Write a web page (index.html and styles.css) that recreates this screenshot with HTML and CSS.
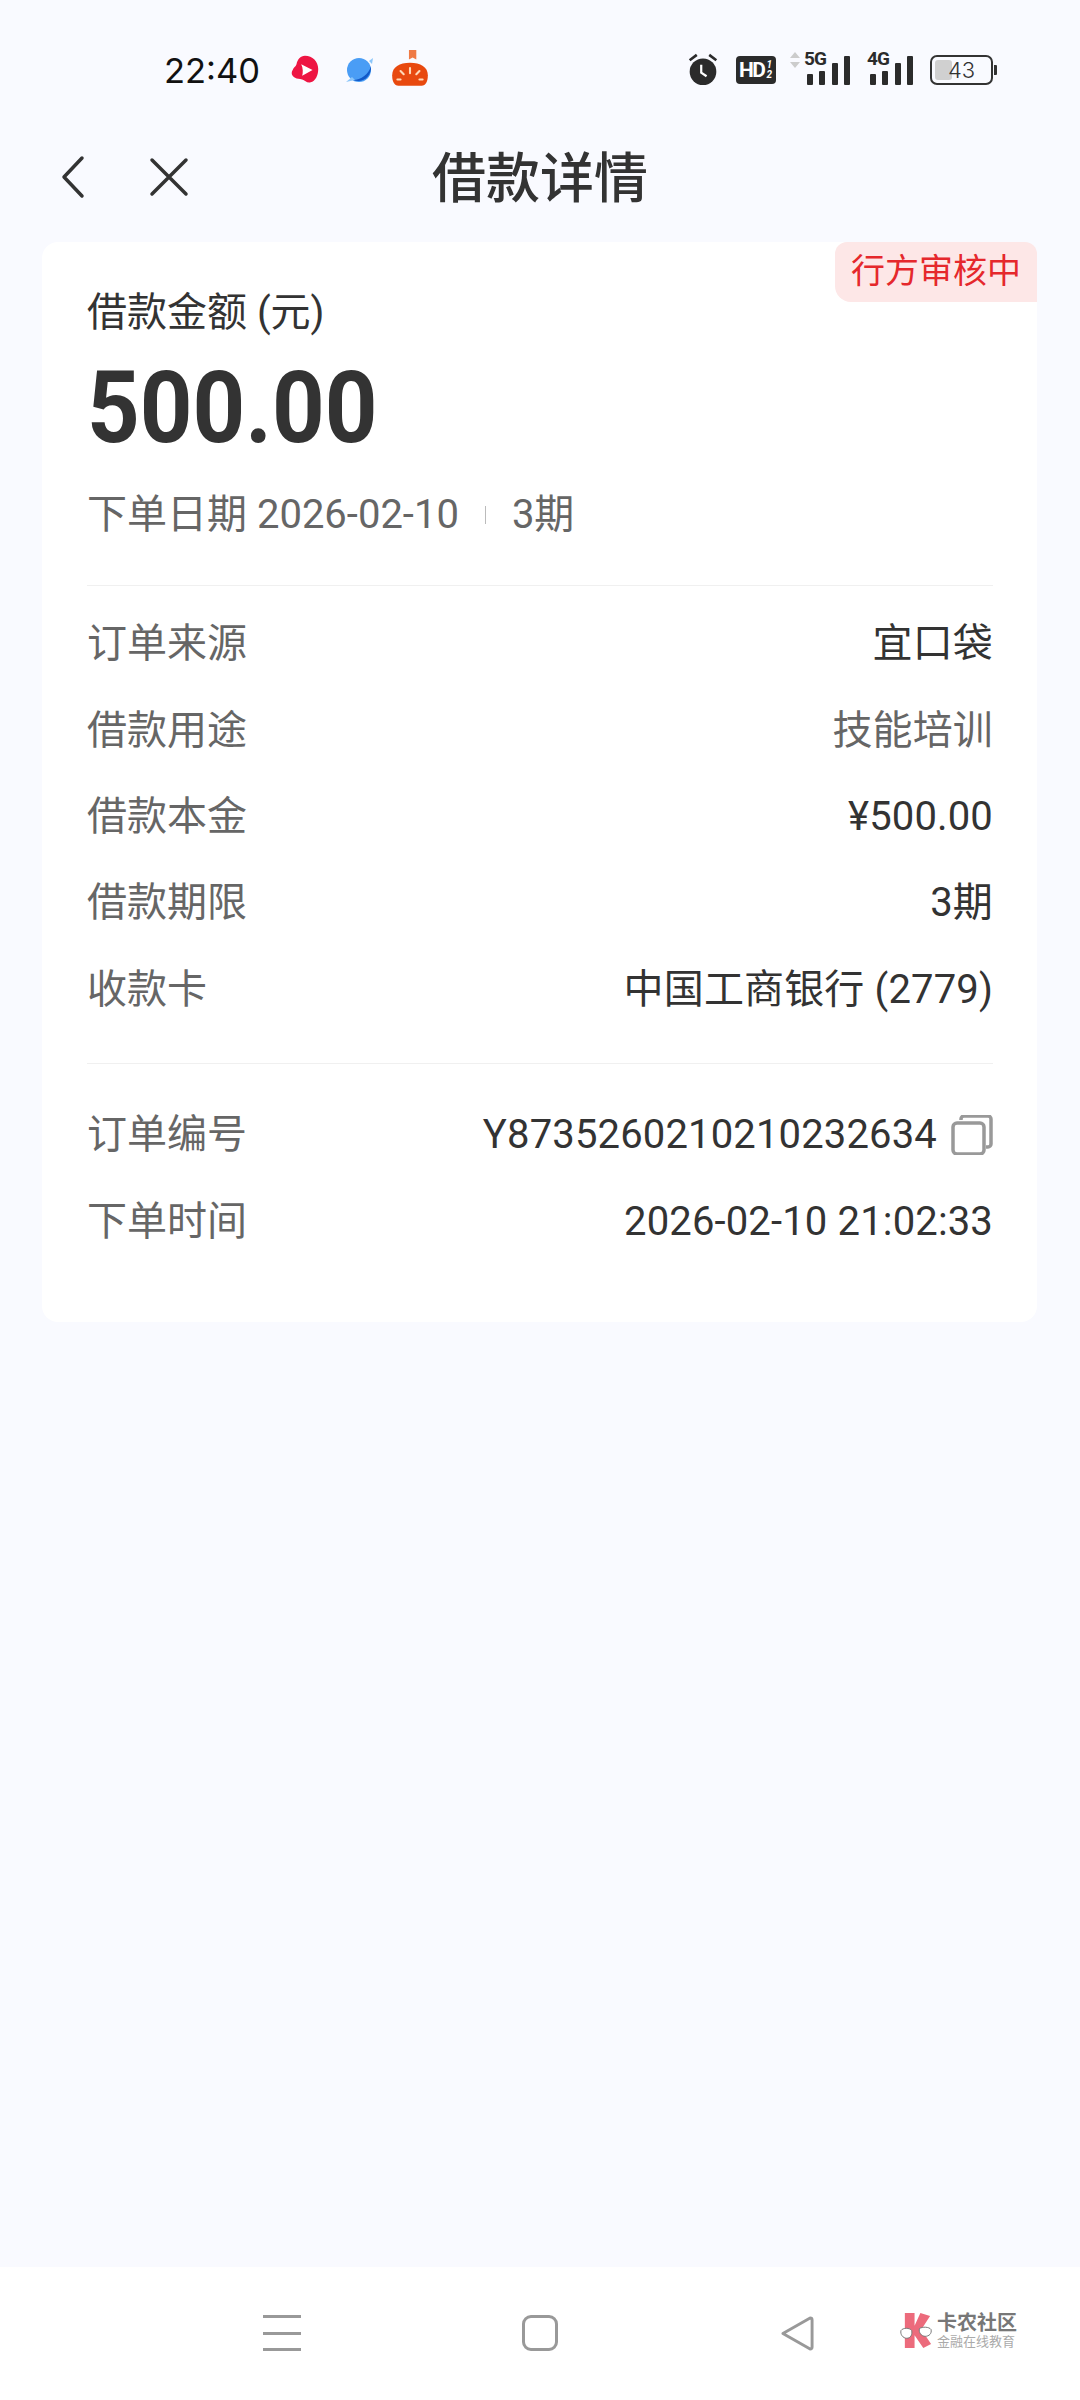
FILE: index.html
```html
<!DOCTYPE html>
<html lang="zh-CN">
<head>
    <meta charset="UTF-8">
    <meta name="viewport" content="width=device-width, initial-scale=1.0">
    <title>借款详情</title>
    <link rel="stylesheet" href="styles.css">
</head>
<body>
    <div class="page">
        <div class="statusbar">
            <div class="status-left">
                <span class="time">22:40</span>
                <svg class="app-icon" viewBox="0 0 36 36"><path d="M18 3c8 0 14 6 14 14 0 7-3 13-8 14-4 1-6-2-9-3-3-1-5 0-8-2-3-2-4-5-2-8 1-3 3-3 4-6 1-5 4-9 9-9z" fill="#ee1543"/><path d="M14 12l12 6-11 6c1-3 1-8-1-12z" fill="#fff"/></svg>
                <svg class="app-icon" viewBox="0 0 36 36"><circle cx="18" cy="18" r="12" fill="#4a9df5"/><path d="M12 28c8 0 16-6 18-14 1 10-8 18-18 14z" fill="#1259c8"/><path d="M5 30l6-5 3 3z" fill="#8cc6fa"/><path d="M28 9l4-3-1 6z" fill="#8cc6fa"/></svg>
                <svg class="app-icon-wide" viewBox="0 0 40 40"><path d="M3 26c0-8 7-12 17-12s17 4 17 12c0 6-2 10-6 10H9c-4 0-6-4-6-10z" fill="#e8490f"/><path d="M19 2h7v9l-3.500-2-3.500 2z" fill="#ef7a45"/><path d="M20 19v5M11 22l3 3M29 22l-3 3M8 30h3M29 30h3" stroke="#ffd9b8" stroke-width="2" stroke-linecap="round"/></svg>
            </div>
            <div class="status-right">
                <svg class="alarm" viewBox="0 0 36 36"><circle cx="18" cy="20" r="15" fill="#2b2b2b"/><path d="M3 7l8-6M33 7l-8-6" stroke="#2b2b2b" stroke-width="3"/><path d="M16 12v9l6 4" stroke="#fff" stroke-width="2.500" fill="none"/></svg>
                <span class="hd">HD<span class="hd-sub"><i>1</i><i>2</i></span></span>
                <svg class="arrows" viewBox="0 0 10 16"><path d="M5 0l5 6H0zM5 16l5-6H0z" fill="#ccc"/></svg>
                <div class="signal">
                    <span class="net">5G</span>
                    <span class="bars"><i class="b1"></i><i class="b2"></i><i class="b3"></i><i class="b4"></i></span>
                </div>
                <div class="signal">
                    <span class="net">4G</span>
                    <span class="bars"><i class="b1"></i><i class="b2"></i><i class="b3"></i><i class="b4"></i></span>
                </div>
                <div class="battery">
                    <div class="battery-body"><div class="battery-fill"></div><span class="battery-num">43</span></div>
                    <div class="battery-tip"></div>
                </div>
            </div>
        </div>

        <div class="navbar">
            <svg class="nav-back" viewBox="0 0 26 44"><path d="M22 3L4 22l18 19" fill="none" stroke="#333" stroke-width="3.500" stroke-linecap="round" stroke-linejoin="round"/></svg>
            <svg class="nav-close" viewBox="0 0 40 40"><path d="M3 3l34 34M37 3L3 37" fill="none" stroke="#333" stroke-width="3.500" stroke-linecap="round"/></svg>
            <h1 class="nav-title">借款详情</h1>
        </div>

        <div class="card">
            <span class="badge">行方审核中</span>
            <div class="amount-label">借款金额 (元)</div>
            <div class="amount">500.00</div>
            <div class="order-meta">
                <span>下单日期 2026-02-10</span>
                <i class="meta-sep"></i>
                <span>3期</span>
            </div>

            <div class="section section-first">
                <div class="row"><span class="row-key">订单来源</span><span class="row-val">宜口袋</span></div>
                <div class="row"><span class="row-key">借款用途</span><span class="row-val row-val-muted">技能培训</span></div>
                <div class="row"><span class="row-key">借款本金</span><span class="row-val">¥500.00</span></div>
                <div class="row"><span class="row-key">借款期限</span><span class="row-val">3期</span></div>
                <div class="row"><span class="row-key">收款卡</span><span class="row-val">中国工商银行 (2779)</span></div>
            </div>

            <div class="section section-last">
                <div class="row">
                    <span class="row-key">订单编号</span>
                    <span class="row-val row-val-copy">Y8735260210210232634
                        <svg class="copy" viewBox="0 0 42 40"><path d="M10 5V4a3 3 0 0 1 3-3h24a3 3 0 0 1 3 3v25a3 3 0 0 1-3 3h-2" fill="none" stroke="#999" stroke-width="3.500"/><rect x="2" y="8" width="31" height="31" rx="4" fill="none" stroke="#999" stroke-width="3.500"/></svg>
                    </span>
                </div>
                <div class="row"><span class="row-key">下单时间</span><span class="row-val">2026-02-10 21:02:33</span></div>
            </div>
        </div>

        <div class="spacer"></div>

        <div class="sysnav">
            <div class="menu-btn"><i></i><i></i><i></i></div>
            <div class="home-btn"></div>
            <svg class="back-btn" viewBox="0 0 36 36"><path d="M31 2L3 18l28 16c1 0 2 0 2-2V4c0-2-1-2-2-2z" fill="none" stroke="#999" stroke-width="3" stroke-linejoin="round"/></svg>
            <!-- watermark over the nav bar -->
            <div class="watermark">
                <svg class="wm-logo" viewBox="0 0 34 36"><path d="M5 0h10v13L21 0l10 3-9 14 10 15-8 4-9-13v13H5z" fill="#ec6b7c"/><path d="M1 18c2-3 9-3 11 0 1 4-1 8-5 8s-7-4-6-8zM20 16c3-2 10-2 12 1 1 4-2 7-6 7s-7-4-6-8z" fill="#fff" stroke="#777"/></svg>
                <div class="wm-text">
                    <span class="wm-name">卡农社区</span>
                    <span class="wm-sub">金融在线教育</span>
                </div>
            </div>
        </div>
    </div>
</body>
</html>
```

FILE: styles.css
```css
* {
    box-sizing: border-box;
}
html, body {
    margin: 0;
    padding: 0;
}
body {
    font-family: Roboto, "Noto Sans CJK SC", sans-serif;
    background: #f9faff;
    color: #333;
}
i {
    display: block;
}
.page {
    width: 1080px;
    height: 2400px;
    display: flex;
    flex-direction: column;
}

/* status bar */
.statusbar {
    height: 128px;
    padding: 12px 83px 0 164px;
    display: flex;
    align-items: center;
    justify-content: space-between;
    flex-shrink: 0;
}
.status-left {
    display: flex;
    align-items: center;
}
.time {
    font-family: Inter, Roboto, sans-serif;
    font-size: 34.500px;
    color: #111;
    width: 124px;
}
.app-icon {
    width: 34px;
    height: 34px;
    margin-right: 19px;
}
.app-icon + .app-icon {
    width: 36px;
    height: 36px;
    margin-right: 12px;
}
.app-icon-wide {
    width: 42px;
    height: 42px;
    margin-top: -3px;
}
.status-right {
    display: flex;
    align-items: center;
}
.alarm {
    width: 32px;
    height: 36px;
    margin-right: 17px;
}
.hd {
    width: 40px;
    height: 28px;
    background: #2b2b2b;
    border-radius: 4px;
    color: #fff;
    font-size: 21px;
    font-weight: 700;
    line-height: 28px;
    padding-left: 3px;
    display: flex;
    letter-spacing: -1.500px;
    margin-right: 14px;
}
.hd-sub {
    font-size: 10px;
    line-height: 10px;
    padding: 4px 0 0 2px;
    letter-spacing: 0;
}
.arrows {
    width: 10px;
    height: 16px;
    margin: -20px 4px 0 0;
}
.signal {
    position: relative;
    width: 46px;
    height: 30px;
    margin-right: 17px;
}
.net {
    position: absolute;
    left: 0;
    top: -6px;
    font-size: 19px;
    line-height: 20px;
    font-weight: 700;
    letter-spacing: -1px;
    color: #2b2b2b;
}
.bars {
    position: absolute;
    left: 3px;
    right: 0;
    bottom: 0;
    display: flex;
    align-items: flex-end;
    gap: 6.300px;
}
.bars i {
    width: 6px;
    background: #2b2b2b;
    border-radius: 1px;
}
.b1 { height: 11px; }
.b2 { height: 14px; }
.b3 { height: 22px; }
.b4 { height: 29px; }
.battery {
    display: flex;
    align-items: center;
}
.battery-body {
    position: relative;
    width: 63px;
    height: 30px;
    border: 2px solid #333;
    border-radius: 7px;
    padding: 3px;
}
.battery-fill {
    width: 17px;
    height: 100%;
    background: #d0d0d0;
    border-radius: 3px;
}
.battery-num {
    position: absolute;
    left: 0;
    right: 0;
    top: 0;
    text-align: center;
    font-family: Inter, sans-serif;
    font-size: 22px;
    font-weight: 300;
    line-height: 26px;
}
.battery-tip {
    width: 3px;
    height: 10px;
    background: #333;
    margin-left: 1px;
    border-radius: 0 1px 1px 0;
}

/* title bar */
.navbar {
    height: 98px;
    display: flex;
    align-items: center;
    position: relative;
    padding-left: 60px;
    flex-shrink: 0;
}
.nav-back {
    width: 26px;
    height: 44px;
}
.nav-close {
    width: 40px;
    height: 40px;
    margin-left: 63px;
}
.nav-title {
    position: absolute;
    left: 0;
    right: 0;
    top: 20px;
    margin: 0;
    text-align: center;
    font-size: 54px;
    line-height: 64px;
    font-weight: 500;
    color: #333;
}

/* card */
.card {
    position: relative;
    margin: 16px 43px 0 42px;
    height: 1080px;
    background: #fff;
    border-radius: 16px;
    padding: 45px 44px 0 45px;
    flex-shrink: 0;
}
.badge {
    position: absolute;
    top: 0;
    right: 0;
    width: 202px;
    height: 60px;
    background: #fde7e7;
    border-radius: 12px 12px 0 16px;
    color: #e5282c;
    font-size: 34px;
    line-height: 58px;
    text-align: center;
}
.amount-label {
    font-size: 40px;
    line-height: 52px;
    color: #333;
}
.amount {
    font-size: 100px;
    font-weight: 700;
    line-height: 122px;
    margin-top: 8px;
    color: #333;
    transform: scaleX(0.92);
    transform-origin: left center;
}
.order-meta {
    display: flex;
    align-items: center;
    margin-top: 20px;
    font-size: 40px;
    line-height: 52px;
    color: #666;
}
.meta-sep {
    width: 1px;
    height: 18px;
    background: #bbb;
    margin: 0 26px;
}
.section {
    border-top: 1px solid #f0f0f0;
}
.section-first {
    margin-top: 44px;
    padding: 15px 0 30px;
}
.section-last {
    padding: 28px 0 0;
}
.row {
    height: 86.400px;
    display: flex;
    align-items: center;
    justify-content: space-between;
    font-size: 40px;
    line-height: 52px;
}
.row-key {
    color: #666;
}
.row-val {
    color: #333;
    letter-spacing: 0.150px;
}
.row-val-muted {
    color: #666;
}
.row-val-copy {
    display: flex;
    align-items: center;
}
.copy {
    width: 42px;
    height: 40px;
    margin-left: 14px;
}

.spacer {
    flex: 1;
}

/* system nav bar */
.sysnav {
    position: relative;
    height: 133px;
    background: #fff;
    display: flex;
    align-items: flex-start;
    padding: 48px 0 0 263px;
    flex-shrink: 0;
}
.menu-btn {
    width: 38px;
    height: 36px;
    display: flex;
    flex-direction: column;
    justify-content: space-between;
}
.menu-btn i {
    height: 3px;
    background: #999;
}
.home-btn {
    width: 36px;
    height: 36px;
    border: 3px solid #999;
    border-radius: 9px;
    margin-left: 221px;
}
.back-btn {
    width: 35px;
    height: 35px;
    margin-left: 222px;
    margin-top: 1px;
}
.watermark {
    position: absolute;
    left: 900px;
    top: 46px;
    display: flex;
    align-items: center;
    gap: 4px;
}
.wm-logo {
    width: 33px;
    height: 35px;
}
.wm-text {
    display: flex;
    flex-direction: column;
    line-height: 1;
}
.wm-name {
    font-size: 20px;
    font-weight: 700;
    color: #777;
}
.wm-sub {
    font-size: 13px;
    color: #aaa;
    margin-top: 2px;
}
```
